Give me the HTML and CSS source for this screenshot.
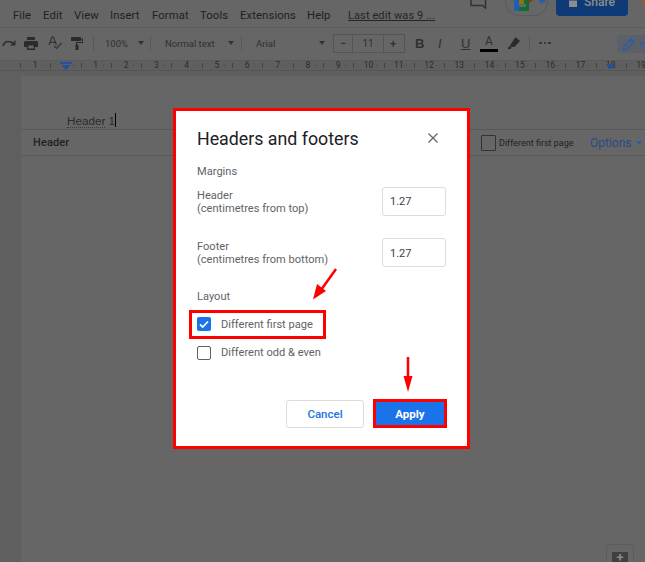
FILE: index.html
```html
<!DOCTYPE html>
<html lang="en">
<head>
<meta charset="utf-8">
<title>Headers and footers</title>
<link rel="stylesheet" href="styles.css">
</head>
<body>
<div class="app">
  <header class="topbar">
    <nav class="menu">
      <span class="m-file">File</span><span class="m-edit">Edit</span><span class="m-view">View</span><span class="m-insert">Insert</span><span class="m-format">Format</span><span class="m-tools">Tools</span><span class="m-ext">Extensions</span><span class="m-help">Help</span>
      <span class="last-edit">Last edit was 9 ...</span>
    </nav>
    <div class="top-actions">
      <svg class="comment-ic" width="17" height="9" viewBox="0 0 17 9"><path d="M1 0v5.500h11.500l3 2.500V0" fill="none" stroke="#333" stroke-width="1.500"/></svg>
      <div class="meet">
        <svg width="22" height="12" viewBox="0 0 22 12"><rect x="0" y="0" width="5" height="11" fill="#1d5fb8"/><rect x="5" y="0" width="6" height="4" fill="#8a7414"/><rect x="5" y="7" width="8" height="4" fill="#136b30"/><path d="M10 0h5v11h-3V4h-2z" fill="#136b30"/><path d="M15 3l5-3v0h-5z" fill="#8a3a20"/></svg>
        <svg width="8" height="5" viewBox="0 0 8 5"><path d="M0 0h8L4 4z" fill="#2b5ea8"/></svg>
      </div>
      <div class="share"><svg width="8" height="10" viewBox="0 0 8 10"><path d="M0 3.500h8V10H0z" fill="#8c8c8c"/></svg><span>Share</span></div>
      <i class="orange"></i>
    </div>
  </header>
  <div class="toolbar">
    <svg class="t-redo" width="14" height="8" viewBox="0 0 14 8"><path d="M1 7c1-3 3-4.500 5.500-4.500 2 0 3 .7 4.500 1.800" fill="none" stroke="#2e2e2e" stroke-width="1.700"/><path d="M13.500 1v5.500H8z" fill="#2e2e2e"/></svg>
    <svg class="t-print" width="14" height="13" viewBox="0 0 14 13"><path d="M3 0h8v3H3zM1.500 4h11A1.500 1.500 0 0 1 14 5.500V10h-3v3H3v-3H0V5.500A1.500 1.500 0 0 1 1.500 4zM4.300 8.500v3h5.400v-3z" fill="#2b2b2b"/></svg>
    <svg class="t-spell" width="14" height="14" viewBox="0 0 14 14"><path d="M1 9l3-8h1.400l3 8M2.200 6.300h5" fill="none" stroke="#333" stroke-width="1.200"/><path d="M6 10l2.500 2.500L13.500 7" fill="none" stroke="#333" stroke-width="1.200"/></svg>
    <svg class="t-paint" width="12" height="14" viewBox="0 0 12 14"><path d="M0 1h10v4H0zM10.500 2.500H12V7H6v1.500h1.500V14h-3V8.500H5V6h6V4h-.5z" fill="#2b2b2b"/></svg>
    <i class="sep s1"></i>
    <span class="t-zoom">100%</span><i class="caret c1"></i>
    <i class="sep s2"></i>
    <span class="t-style">Normal text</span><i class="caret c2"></i>
    <i class="sep s3"></i>
    <span class="t-font">Arial</span><i class="caret c3"></i>
    <div class="size"><span>&#8722;</span><span class="size-n">11</span><span>+</span></div>
    <b class="t-b">B</b><em class="t-i">I</em><span class="t-u">U</span>
    <span class="t-a">A</span>
    <svg class="t-hl" width="12" height="12" viewBox="0 0 12 12"><path d="M7.500 0L12 4 6.500 10H3.500L2 8.500zM0 10.500l2-1.500 1.500 1.500-1 1.500H0z" fill="#2b2b2b"/></svg>
    <i class="sep s5"></i>
    <span class="t-more"><i></i><i></i><i></i></span>
    <div class="t-mode"><svg width="14" height="14" viewBox="0 0 14 14"><path d="M1 13l.8-3.500L9.500 1.800l2.700 2.700-7.700 7.700zM8.500 2.800l2.700 2.700" fill="none" stroke="#2b5ea8" stroke-width="1.400"/></svg><i class="caret blue"></i></div>
  </div>
  <div class="ruler">
    <span class="tick">1</span><span class="tick"></span><span class="tick">1</span><span class="tick">2</span><span class="tick">3</span><span class="tick">4</span><span class="tick">5</span><span class="tick">6</span><span class="tick">7</span><span class="tick">8</span><span class="tick">9</span><span class="tick">10</span><span class="tick">11</span><span class="tick">12</span><span class="tick">13</span><span class="tick">14</span><span class="tick">15</span><span class="tick">16</span><span class="tick">17</span><span class="tick">18</span><span class="tick">19</span>
    <svg class="indent" width="12" height="9" viewBox="0 0 12 9"><path d="M0 0h12v2H0zM1.500 3h9L6 8.500z" fill="#2a4f9a"/></svg>
    <svg class="indent-r" width="8" height="6" viewBox="0 0 8 6"><path d="M0 0h8L4 6z" fill="#2a4f9a"/></svg>
  </div>
  <main class="canvas">
    <section class="page">
      <div class="head-text"><span class="squiggle">Header</span> 1<i class="cursor"></i></div>
      <div class="head-band">
        <span class="band-label">Header</span>
        <span class="band-check"></span>
        <span class="band-diff">Different first page</span>
        <span class="band-opt">Options</span><i class="caret blue opt"></i>
      </div>
    </section>
    <div class="plus-box"><span class="plus">+</span></div>
  </main>
</div>

<div class="dialog" role="dialog">
  <div class="dlg-head">
    <h1>Headers and footers</h1>
    <svg class="close" width="10" height="10" viewBox="0 0 10 10"><path d="M.5.500l9 9M9.500.500l-9 9" stroke="#5f6368" stroke-width="1.200"/></svg>
  </div>
  <h2 class="section margins">Margins</h2>
  <div class="field f1">
    <div class="field-label">Header<br>(centimetres from top)</div>
    <div class="input">1.27</div>
  </div>
  <div class="field f2">
    <div class="field-label">Footer<br>(centimetres from bottom)</div>
    <div class="input">1.27</div>
  </div>
  <h2 class="section layout">Layout</h2>
  <div class="opt-first">
    <span class="check on"><svg width="14" height="14" viewBox="0 0 14 14"><path d="M3 7.300l2.700 2.700L11 4.500" fill="none" stroke="#fff" stroke-width="1.700"/></svg></span>
    <span class="opt-label">Different first page</span>
  </div>
  <div class="opt-odd">
    <span class="check"></span>
    <span>Different odd &amp; even</span>
  </div>
  <div class="buttons">
    <button class="btn cancel">Cancel</button>
    <button class="btn apply">Apply</button>
  </div>
</div>

<svg class="arrows" width="645" height="562" viewBox="0 0 645 562">
  <path d="M336 269L321 290" stroke="#f00" stroke-width="2.500" fill="none"/>
  <path d="M313 299.500L317 284l9 7z" fill="#f00"/>
  <path d="M408 357V378" stroke="#f00" stroke-width="2.500" fill="none"/>
  <path d="M408 392l-4.500-16h9z" fill="#f00"/>
</svg>
</body>
</html>
```
FILE: styles.css
```css
* { box-sizing: border-box; }
html, body { margin: 0; padding: 0; }
body {
  width: 645px;
  height: 562px;
  overflow: hidden;
  position: relative;
  background: #666;
  font-family: Roboto, "Liberation Sans", sans-serif;
  color: #222;
}
.app { display: flex; flex-direction: column; width: 645px; height: 562px; }

.topbar { height: 28px; position: relative; border-bottom: 1px solid #5c5c5c; flex: none; }
.menu { display: flex; height: 27px; padding: 9px 0 0 13px; font-size: 11.300px; line-height: 13px; color: #1f1f1f; white-space: nowrap; letter-spacing: .1px; }
.m-file { width: 30px; } .m-edit { width: 31px; } .m-view { width: 36px; } .m-insert { width: 42px; }
.m-format { width: 48px; } .m-tools { width: 40px; } .m-ext { width: 67px; } .m-help { width: 41px; }
.last-edit { color: #252525; text-decoration: underline; font-size: 11px; }
.top-actions { position: absolute; top: 0; left: 470px; display: flex; align-items: flex-start; }
.comment-ic { margin-right: 18px; }
.meet { width: 43px; height: 16px; border: 1px solid #5a5a5a; border-top: 0; border-radius: 0 0 14px 14px; display: flex; align-items: flex-start; gap: 2px; padding-left: 8px; }
.share { width: 72px; height: 16px; margin-left: 8px; background: #0e3a78; border-radius: 0 0 4px 4px; display: flex; gap: 7px; padding-left: 13px; font-size: 12px; font-weight: 500; line-height: 4px; color: #8c8c8c; overflow: hidden; }
.share svg { margin-top: -3px; flex: none; }
.orange { width: 3px; height: 5px; margin-left: 15px; background: #a05a1c; }

.toolbar { height: 32px; flex: none; padding-bottom: 2px; display: flex; align-items: center; font-size: 9.500px; color: #303030; position: relative; }
.t-redo { margin-left: 2px; }
.t-print { margin-left: 8px; }
.t-spell { margin-left: 10px; }
.t-paint { margin-left: 9px; }
.sep { width: 1px; height: 15px; background: #585858; flex: none; }
.s1 { margin-left: 10px; }
.t-zoom { margin-left: 11px; width: 24px; white-space: nowrap; }
.caret { width: 0; height: 0; border: 3.500px solid transparent; border-top: 4px solid #333; border-bottom: 0; flex: none; }
.caret.blue { border-top-color: #2b5ea8; }
.c1 { margin-left: 9px; }
.s2 { margin-left: 6px; }
.t-style { margin-left: 14px; width: 50px; white-space: nowrap; }
.c2 { margin-left: 12.500px; }
.s3 { margin-left: 7.500px; }
.t-font { margin-left: 14px; width: 19px; }
.c3 { margin-left: 43.500px; }
.size { width: 72px; height: 19px; margin-left: 8.500px; display: flex; border: 1px solid #555; font-size: 11px; line-height: 17px; text-align: center; font-weight: 500; flex: none; }
.size span { width: 18px; }
.size .size-n { width: 32px; border-left: 1px solid #555; border-right: 1px solid #555; font-weight: 400; font-size: 10px; }
.t-b { margin-left: 10px; width: 23px; font-size: 13px; font-family: "Liberation Sans", sans-serif; }
.t-i { width: 23px; font-size: 13px; font-family: "Liberation Sans", sans-serif; }
.t-u { width: 19px; font-size: 13px; text-decoration: underline; font-family: "Liberation Sans", sans-serif; }
.t-a { width: 18px; height: 18px; font-size: 12px; line-height: 14px; text-align: center; border-bottom: 3px solid #000; flex: none; }
.t-hl { margin-left: 10px; }
.sep.s5 { margin-left: 9px; }
.t-more { margin-left: 9px; display: flex; gap: 2px; }
.t-more i { width: 2.500px; height: 2.500px; border-radius: 50%; background: #303030; }
.t-mode { position: absolute; left: 617px; top: 7px; width: 30px; height: 18px; background: #5b6069; border-radius: 3px; display: flex; align-items: center; gap: 3px; padding-left: 5px; }

.ruler { height: 11px; flex: none; display: flex; padding-left: 20px; background: #5f5f5f; border-top: 1px solid #5a5a5a; border-bottom: 1px solid #565656; position: relative; }
.tick { width: 30.300px; flex: none; height: 9px; font-size: 8.500px; line-height: 9px; color: #2c2c2c; display: flex; justify-content: center; gap: 4px; position: relative; }
.tick::before { content: ""; position: absolute; left: 0; top: 2px; width: 1px; height: 5px; background: #444; }
.tick::after { content: ""; position: absolute; right: 7px; top: 4px; width: 1px; height: 1px; background: #444; }
.indent { position: absolute; left: 60px; top: 1px; }
.indent-r { position: absolute; left: 606px; top: 3px; }

.canvas { flex: 1; padding: 5px 0 0 21px; background: #5f5f5f; position: relative; }
.page { width: 624px; height: 490px; background: #666; padding-top: 37px; position: relative; }
.head-text { margin-left: 46px; height: 16px; font-family: "Liberation Sans", sans-serif; font-size: 11.700px; line-height: 15px; color: #2b2b2b; }
.squiggle { border-bottom: 1px dotted #3a3a3a; }
.cursor { display: inline-block; width: 1px; height: 14px; background: #000; vertical-align: -2px; }
.head-band { height: 27px; border-top: 1px solid #585858; border-bottom: 1px solid #585858; display: flex; align-items: center; font-size: 11px; color: #222; position: relative; padding-left: 12px; }
.band-label { width: 448px; font-weight: 500; letter-spacing: .1px; }
.band-check { width: 15px; height: 16px; border: 1px solid #333; border-radius: 1px; flex: none; }
.band-diff { margin-left: 3px; width: 91px; font-size: 9px; color: #222; white-space: nowrap; }
.band-opt { font-size: 12px; color: #2a4a86; margin-left: 0; }
.opt { margin-left: 4px; }
.plus-box { position: absolute; left: 606px; top: 473px; width: 28px; height: 30px; border: 1px solid #5c5c5c; border-radius: 4px; padding: 7px 0 0 5px; }
.plus { display: block; width: 16px; height: 30px; background: #3f3f3f; color: #888; font-size: 13px; font-weight: 700; line-height: 12px; text-align: center; }

.dialog {
  position: absolute; left: 173px; top: 108px; width: 297px; height: 341px;
  background: #fff; border: 3px solid #f00; padding: 0 21px; color: #5f6368;
  font-size: 11.100px; line-height: 12.500px;
}
.dlg-head { display: flex; justify-content: space-between; align-items: center; height: 26px; margin-top: 15px; padding-right: 3px; }
.dlg-head h1 { margin: 0; font-size: 17.800px; font-weight: 400; color: #202124; line-height: 26px; white-space: nowrap; }
.close { margin-right: 5px; margin-top: -2px; }
.section { margin: 0; font-size: 11.100px; font-weight: 400; color: #5f6368; line-height: 13px; }
.margins { margin-top: 13px; }
.field { display: flex; justify-content: space-between; align-items: flex-start; }
.f1 { margin-top: 9px; }
.f2 { margin-top: 22px; }
.field-label { padding-top: 3px; }
.f2 .field-label { line-height: 13px; padding-top: 2px; }
.input { width: 64px; height: 29px; border: 1px solid #dadce0; border-radius: 3px; padding-left: 7px; font-size: 11px; line-height: 27px; color: #3c4043; }
.f2 .input { line-height: 29px; }
.layout { margin-top: 23px; }
.opt-first { display: flex; align-items: center; gap: 10px; width: 137px; height: 29px; margin: 7px 0 0 -8px; padding-left: 5px; border: 3px solid #f00; white-space: nowrap; }
.opt-first .check { margin-top: -2px; }
.opt-label { padding-top: 1px; }
.opt-odd { display: flex; align-items: center; gap: 10px; height: 14px; margin-top: 7px; white-space: nowrap; }
.check { width: 14px; height: 14px; border: 1px solid #5f6368; border-radius: 2px; flex: none; display: block; }
.check.on { background: #1a73e8; border: 0; }
.check svg { display: block; }
.buttons { display: flex; justify-content: flex-end; align-items: flex-end; gap: 9px; margin-top: 39px; margin-right: -1px; }
.btn { font-family: inherit; font-size: 11.500px; height: 28px; border-radius: 3px; padding: 0; }
.cancel { width: 78px; background: #fff; border: 1px solid #dadce0; color: #1a73e8; font-weight: 500; }
.apply { width: 74px; height: 29px; background: #1a73e8; border: 3px solid #f00; border-radius: 0; color: #fff; font-weight: 700; }

.arrows { position: absolute; left: 0; top: 0; pointer-events: none; }
```
